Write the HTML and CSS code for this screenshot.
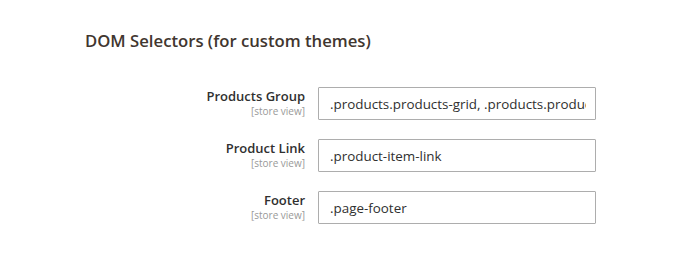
FILE: index.html
```html
<!DOCTYPE html>
<html>
<head>
<meta charset="utf-8">
<link rel="stylesheet" href="styles.css">
</head>
<body>
<div class="section">
  <h2 class="legend">DOM Selectors (for custom themes)</h2>
  <div class="fields">
    <div class="row">
      <div class="label"><span class="name">Products Group</span><span class="scope">[store view]</span></div>
      <input class="input" type="text" value=".products.products-grid, .products.products-list">
    </div>
    <div class="row">
      <div class="label"><span class="name">Product Link</span><span class="scope">[store view]</span></div>
      <input class="input" type="text" value=".product-item-link">
    </div>
    <div class="row">
      <div class="label"><span class="name">Footer</span><span class="scope">[store view]</span></div>
      <input class="input" type="text" value=".page-footer">
    </div>
  </div>
</div>
</body>
</html>
```
FILE: styles.css
```css
html, body {
  margin: 0;
  padding: 0;
  background: #fff;
  font-family: "Open Sans", "Liberation Sans", sans-serif;
}
.section {
  padding: 29px 0 0 85px;
}
.legend {
  margin: 0;
  font-size: 16.7px;
  font-weight: 600;
  color: #41362f;
  line-height: 24px;
}
.fields {
  margin-top: 34px;
  display: flex;
  flex-direction: column;
  gap: 19px;
}
.row {
  display: grid;
  grid-template-columns: 220px 278px;
  column-gap: 13px;
  align-items: start;
}
.label {
  display: flex;
  flex-direction: column;
  align-items: flex-end;
  padding-top: 1px;
}
.name {
  font-size: 13px;
  font-weight: 600;
  color: #303030;
  line-height: 17px;
}
.scope {
  font-size: 10px;
  color: #999;
  line-height: 13px;
}
.input {
  box-sizing: border-box;
  width: 278px;
  height: 33px;
  margin: 0;
  border: 1px solid #adadad;
  border-radius: 1px;
  padding: 0 9px 0 11px;
  font-family: "Open Sans", "Liberation Sans", sans-serif;
  font-size: 13.4px;
  color: #303030;
  background: #fff;
  outline: none;
}
```
